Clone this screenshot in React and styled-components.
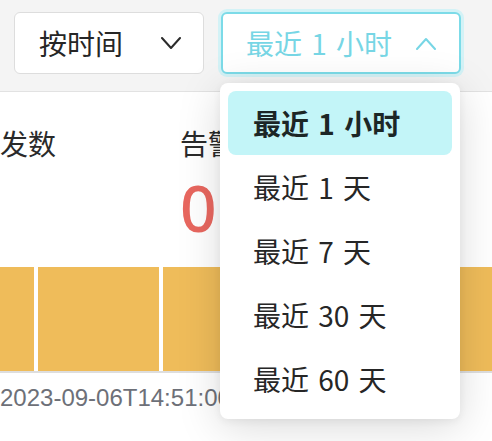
import React from "react";
import styled, { createGlobalStyle } from "styled-components";

const Global = createGlobalStyle`
  html, body { margin: 0; padding: 0; background: #ffffff; }
  body { font-family: "Noto Sans CJK SC", "Noto Sans", sans-serif; }
  #root { width: 492px; height: 441px; overflow: hidden; }
`;

const Page = styled.div`
  width: 492px;
  height: 441px;
  display: flex;
  flex-direction: column;
  overflow: hidden;
  background: #ffffff;
`;

const Header = styled.div`
  display: flex;
  align-items: flex-start;
  gap: 17px;
  padding: 12px 14px 17px 14px;
  background: #f4f4f4;
  border-bottom: 1px solid #e2e2e2;
`;

const SelectWrap = styled.div`
  position: relative;
`;

const SelectButton = styled.div`
  box-sizing: border-box;
  width: ${(p) => p.$width}px;
  height: 62px;
  display: flex;
  align-items: center;
  justify-content: space-between;
  padding: 0 ${(p) => p.$padRight}px 0 ${(p) => (p.$active ? 23 : 24)}px;
  background: #ffffff;
  border: ${(p) => (p.$active ? "2px solid #7cdbe8" : "1px solid #dddddd")};
  border-radius: 6px;
  box-shadow: ${(p) => (p.$active ? "0 0 0 3px #d3f2f6" : "none")};
  color: ${(p) => (p.$active ? "#77d6e5" : "#262626")};
  font-size: 28px;
  line-height: 40px;
  word-spacing: 3px;
  white-space: pre;
`;

const Chevron = ({ up, color }) => (
  <svg width="20" height="13" viewBox="0 0 20 13" fill="none">
    <polyline
      points={up ? "1,12 10,2 19,12" : "1,1 10,11 19,1"}
      stroke={color}
      strokeWidth="2"
      strokeLinecap="round"
      strokeLinejoin="round"
    />
  </svg>
);

const Menu = styled.div`
  position: absolute;
  top: 71px;
  left: -1px;
  width: 240px;
  box-sizing: border-box;
  padding: 8px;
  background: #ffffff;
  border-radius: 8px;
  box-shadow: 0 8px 44px rgba(0, 0, 0, 0.15), 0 2px 8px rgba(0, 0, 0, 0.06);
  display: flex;
  flex-direction: column;
  z-index: 10;
`;

const MenuItem = styled.div`
  height: 64px;
  display: flex;
  align-items: center;
  padding-left: 25px;
  border-radius: 8px;
  font-size: 28px;
  word-spacing: 3px;
  white-space: pre;
  color: ${(p) => (p.$selected ? "#1c2626" : "#262626")};
  font-weight: ${(p) => (p.$selected ? 700 : 400)};
  background: ${(p) => (p.$selected ? "#c3f5f8" : "transparent")};
`;

const Content = styled.div`
  display: flex;
  flex-direction: column;
  padding-top: 31px;
`;

const Stats = styled.div`
  display: flex;
`;

const Stat = styled.div`
  width: ${(p) => p.$width}px;
  display: flex;
  flex-direction: column;
  gap: 13px;
  flex-shrink: 0;
`;

const StatLabel = styled.div`
  font-size: 28px;
  line-height: 40px;
  color: #2a2a2a;
  white-space: nowrap;
`;

const StatValue = styled.div`
  font-family: "Noto Sans", "Noto Sans CJK SC", sans-serif;
  font-size: 64px;
  font-weight: 500;
  line-height: 64px;
  height: 64px;
  color: #e8675f;
`;

const Bars = styled.div`
  margin-top: 27px;
  display: flex;
  gap: 4px;
  height: 104px;
  border-bottom: 2px solid #dedede;
  background: #ffffff;
`;

const Bar = styled.div`
  background: #efbc5a;
  width: ${(p) => (p.$width ? `${p.$width}px` : "auto")};
  flex: ${(p) => (p.$width ? "0 0 auto" : "1 1 auto")};
`;

const Timestamp = styled.div`
  margin-top: 10px;
  font-family: "Liberation Sans", Arial, sans-serif;
  font-size: 24px;
  line-height: 30px;
  color: #6d7078;
  white-space: nowrap;
`;

const options = ["最近 1 小时", "最近 1 天", "最近 7 天", "最近 30 天", "最近 60 天"];

export default function App() {
  return (
    <>
      <Global />
      <Page>
        <Header>
          <SelectButton $width={190} $padRight={22}>
            <span>按时间</span>
            <Chevron color="#2b2b2b" />
          </SelectButton>
          <SelectWrap>
            <SelectButton $width={240} $padRight={23} $active>
              <span>最近 1 小时</span>
              <Chevron up color="#77d6e5" />
            </SelectButton>
            <Menu>
              {options.map((o, i) => (
                <MenuItem key={o} $selected={i === 0}>
                  {o}
                </MenuItem>
              ))}
            </Menu>
          </SelectWrap>
        </Header>
        <Content>
          <Stats>
            <Stat $width={180}>
              <StatLabel>发数</StatLabel>
              <StatValue />
            </Stat>
            <Stat $width={200}>
              <StatLabel>告警数</StatLabel>
              <StatValue>0</StatValue>
            </Stat>
          </Stats>
          <Bars>
            <Bar $width={34} />
            <Bar $width={121} />
            <Bar />
          </Bars>
          <Timestamp>2023-09-06T14:51:00</Timestamp>
        </Content>
      </Page>
    </>
  );
}
